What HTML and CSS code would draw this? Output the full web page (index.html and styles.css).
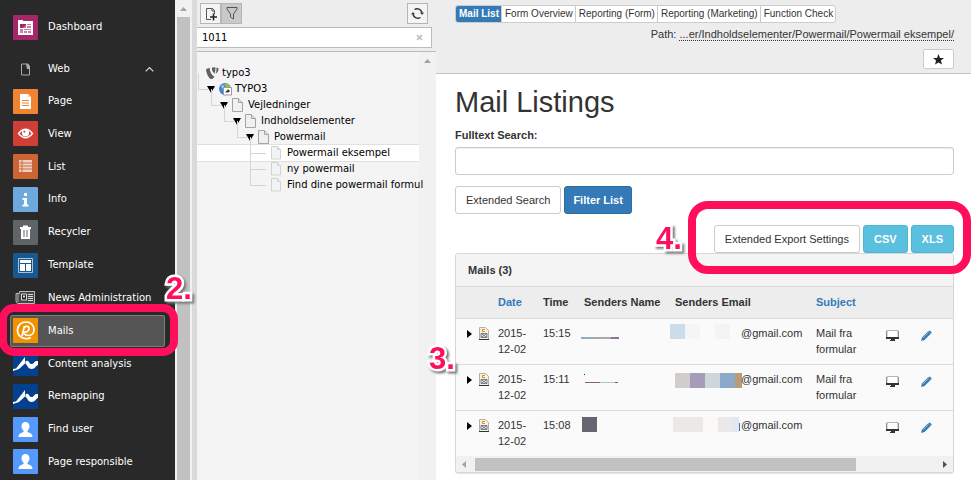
FILE: index.html
```html
<!DOCTYPE html>
<html lang="en">
<head>
<meta charset="utf-8">
<title>Mail Listings</title>
<link rel="stylesheet" href="styles.css">
</head>
<body>
<svg class="defs" aria-hidden="true">
  <symbol id="doc" viewBox="0 0 13 14"><path d="M.5.5h6l4 4v9H.5z" fill="#f0f0f0" stroke="#a3a3a3"/><path d="M6.500.5v4h4" fill="#ddd" stroke="#a3a3a3"/></symbol>
  <symbol id="doc-light" viewBox="0 0 13 14"><path d="M.5.5h6l3 3v9.500H.5z" fill="#f3f3f3" stroke="#d2d2d2"/><path d="M6.500.5v3h3" fill="#e8e8e8" stroke="#d2d2d2"/></symbol>
  <symbol id="wave" viewBox="0 0 25 25"><path fill="#03418f" d="M0 0h25v25H0z"/><path d="M0 18l3-.5L12 6v6.500L6 18l-6 2zM12.500 10q2.500-1 3.500 1c1.500 3 4 2.500 5.500 0q1-1.500 3.500-1v4c-2 0-2.500 4-6.500 4-4 0-3.500-4-6-5z" fill="#fff"/></symbol>
  <symbol id="user" viewBox="0 0 25 25"><rect width="25" height="25" rx="1" fill="#5599fc"/><path d="M12.500 5c2.500 0 4 1.700 4 4.200 0 2-1 3.400-2 4.300v1.500c2 1 5 1.300 5 5h-14c0-3.700 3-4 5-5v-1.500c-1-.9-2-2.300-2-4.300C8.500 6.700 10 5 12.500 5z" fill="#fff"/></symbol>
  <symbol id="mail-rec" viewBox="0 0 10 13"><path d="M.5.5h6l3 3v9h-9z" fill="#f4f1ec" stroke="#b3afab"/><path d="M3 2h3v1H4v1h2v1H3z" fill="#f39200"/><path d="M2 6.500h6v4H2zM2 6.500l6 4M8 6.500l-6 4" fill="#eee" stroke="#666" stroke-width=".8"/><path d="M0 12.500h10" stroke="#333"/></symbol>
  <symbol id="monitor" viewBox="0 0 13 11"><path d="M1 .5h11v8H1z" fill="#fff" stroke="#b5b5b5"/><path d="M.5 1v7M12.500 1v7" stroke="#8c8c8c"/><path d="M0 7h13v2H0zM5 9h4v1H5zM4 10h5v1H4z" fill="#333"/></symbol>
  <symbol id="pencil" viewBox="0 0 11 11"><path d="M0 11l1-3.500L7 1.500l2.500 2.500-6 6z" fill="#337ab7"/><path d="M7.700.900q.8-.8 1.600 0l.9.900q.8.800 0 1.600l-.5.500L7.200 1.400z" fill="#337ab7"/><path d="M2 8l5-5" stroke="#9fc0de" stroke-width=".8"/></symbol>
</svg>
<div class="app">
  <nav class="sidebar">
    <a class="mod" href="#dashboard"><svg class="mod-icon" viewBox="0 0 25 25"><rect width="25" height="25" rx="1" fill="#a4276a"/><path d="M5 5h5v1h10v14H5z" fill="#fff"/><path d="M7 9h6v4H7zM14 9h4v1h-4zM14 11h4v2h-4zM7 14h3v4H7zM11 14h7v1h-7zM11 16h3v2h-3zM15 16h3v2h-3z" fill="#c880a8"/><path d="M7 9h6v1l-2 2-2 1H7z" fill="#a4276a"/></svg>Dashboard</a>
    <button class="mod group" type="button"><svg class="mod-icon" viewBox="0 0 25 25"><path d="M8.500 7h5l3 3v8h-8z" fill="none" stroke="#aaa"/><path d="M13 6.500h2l2 2.500V12H14z" fill="#aaa"/></svg>Web<svg class="caret" viewBox="0 0 9 6"><path d="M.7 5.300L4.500 1.500l3.800 3.800" fill="none" stroke="#ddd" stroke-width="1.200"/></svg></button>
    <div class="mods">
      <a class="mod" href="#page"><svg class="mod-icon" viewBox="0 0 25 25"><rect width="25" height="25" rx="1" fill="#ef8433"/><path d="M7 5h8l3 3v12H7z" fill="#fff"/><path d="M15 5v3h3" fill="#f9cfac"/><path d="M9 11.500h7M9 14h7M9 16.500h7" stroke="#ef8433"/></svg>Page</a>
      <a class="mod" href="#view"><svg class="mod-icon" viewBox="0 0 25 25"><rect width="25" height="25" rx="1" fill="#d03f37"/><path d="M5.500 12.500q7-8.500 14 0-7 8.500-14 0z" fill="#d03f37" stroke="#fff" stroke-width="1.300"/><circle cx="12.500" cy="12" r="3.600" fill="#fff"/><circle cx="11.400" cy="10.800" r="1" fill="#d03f37"/></svg>View</a>
      <a class="mod" href="#list"><svg class="mod-icon" viewBox="0 0 25 25"><rect width="25" height="25" rx="1" fill="#cb6534"/><path d="M6 6h13v12H6z" fill="#efcfc0"/><path d="M6 9h13M6 12h13M6 15h13M9 6v12" stroke="#cb6534" stroke-width=".9"/></svg>List</a>
      <a class="mod" href="#info"><svg class="mod-icon" viewBox="0 0 25 25"><rect width="25" height="25" rx="1" fill="#6ea9de"/><path d="M11 6h3v3h-3zM9.500 11H14v6.500h1.500v2h-6v-2H11V13H9.500z" fill="#fff"/></svg>Info</a>
      <a class="mod" href="#recycler"><svg class="mod-icon" viewBox="0 0 25 25"><rect width="25" height="25" rx="1" fill="#5f6467"/><path d="M7 7h3V5.500h5V7h3v2h-1v10H8V9H7z" fill="#fff"/><path d="M11 10v7M14 10v7" stroke="#5f6467"/></svg>Recycler</a>
      <a class="mod" href="#template"><svg class="mod-icon" viewBox="0 0 25 25"><rect width="25" height="25" rx="1" fill="#19578f"/><path d="M5.500 5.500h14v14h-14z" fill="none" stroke="#a9c1d8"/><path d="M7 7h11v3H7zM7 11h5v7H7zM13 11h5v7h-5z" fill="#fff"/></svg>Template</a>
      <a class="mod" href="#news"><svg class="mod-icon" viewBox="0 0 25 25"><path d="M6.500 6.500h15v12h-17q-1.500-.5-1.500-3v-7h3.500z" fill="#444" stroke="#bbb"/><path d="M8.500 9h5v6h-5z" fill="#222" stroke="#ddd"/><path d="M10 10.500h2v2h-2zM15 9h5v1h-5zM15 11h5v1h-5zM15 13h5v1h-5zM15 15h5v1h-5z" fill="#ddd"/><path d="M5 9v8" stroke="#aaa"/></svg>News Administration</a>
      <a class="mod current" href="#mails"><svg class="mod-icon" viewBox="0 0 25 25"><path fill="#f39200" d="M0 0h25v25H0z"/><path d="M18 19.500C12 22.500 4.500 19 4.500 12.500 4.500 7 8.500 4 13 4s8 3 8 7.500c0 4-2.500 6-5 6-2 0-4-.5-5.500-2M11.500 8L9 18M11 9.500c2-2 5.500-1.500 5 1.500s-4 4-5.500 2.500" fill="none" stroke="#fff" stroke-width="1.700"/></svg>Mails</a>
      <a class="mod" href="#content"><svg class="mod-icon"><use href="#wave"/></svg>Content analysis</a>
      <a class="mod" href="#remapping"><svg class="mod-icon"><use href="#wave"/></svg>Remapping</a>
      <a class="mod" href="#finduser"><svg class="mod-icon"><use href="#user"/></svg>Find user</a>
      <a class="mod" href="#responsible"><svg class="mod-icon"><use href="#user"/></svg>Page responsible</a>
    </div>
  </nav>
  <div class="side-scroll"><svg viewBox="0 0 7 4"><path d="M0 4l3.500-4L7 4z" fill="#a3a3a3"/></svg><div class="thumb"></div></div>
  <section class="pagetree">
    <div class="tree-tools">
      <button type="button" class="tool" aria-label="New page"><svg width="12" height="14" viewBox="0 0 12 14"><path d="M6 12.500H1.500v-11h6l2 2V7" fill="none" stroke="#555"/><path d="M7 1v3h3" fill="none" stroke="#555"/><path d="M5 10h7M8.500 6.500v7" stroke="#222" stroke-width="1.500"/></svg></button><button type="button" class="tool on" aria-label="Filter"><svg width="12" height="13" viewBox="0 0 12 13"><path d="M1 .5h10v1.500L7.500 7v5L4.500 10V7L1 2z" fill="none" stroke="#555"/></svg></button>
      <button type="button" class="tool refresh" aria-label="Refresh"><svg width="13" height="13" viewBox="0 0 13 13"><path d="M3.500 2.500a5 5 0 0 1 7.500 3M9.500 10.500a5 5 0 0 1-7.500-3" fill="none" stroke="#333" stroke-width="1.400"/><path d="M9 5.500h4L11 8zM0 7.500h4L2 5z" fill="#333"/></svg></button>
    </div>
    <div class="filter"><input type="text" value="1011" aria-label="Filter tree"><button type="button" aria-label="Clear"><svg width="7" height="7" viewBox="0 0 7 7"><path d="M1 1l5 5M6 1L1 6" stroke="#bbb" stroke-width="1.600"/></svg></button></div>
    <div class="tree-area">
      <div class="tree">
        <div class="row"><svg class="node-icon" viewBox="0 0 13 14"><path d="M0 3.500q1-1.500 4-1.500c-.8 2 1.500 7.500 4.500 8.500-1 2-2 2.500-3.500 2.500C3 13 0 6.500 0 3.500zM6 1.500q2.500-.7 3.500 0 0 4-1 6C6.500 6.500 5.500 3 6 1.500zM10.500 1.500Q13 1.500 12.500 4 12 6.500 9.500 8q1.200-3 1-6.500z" fill="#606060"/></svg>typo3</div>
        <ul>
          <li><div class="row"><svg class="toggle" viewBox="0 0 10 9"><path d="M1 1h8L5 8z"/></svg><svg class="node-icon" viewBox="0 0 13 14"><circle cx="6" cy="7" r="6" fill="#4585d8"/><path d="M5 2q3-1.500 6 2v3L7 6z" fill="#8bc34a"/><path d="M2 4l3-1-1 4z" fill="#b5d6f5"/><path d="M4.500 5.500h8v7.500h-8z" fill="#fff" stroke="#999"/><path d="M6.500 11q0-2.500 2-2.500V7L11 9l-2.500 2V9.800z" fill="#222"/></svg>TYPO3</div>
            <ul>
              <li><div class="row"><svg class="toggle" viewBox="0 0 10 9"><path d="M1 1h8L5 8z"/></svg><svg class="node-icon"><use href="#doc"/></svg>Vejledninger</div>
                <ul>
                  <li><div class="row"><svg class="toggle" viewBox="0 0 10 9"><path d="M1 1h8L5 8z"/></svg><svg class="node-icon"><use href="#doc"/></svg>Indholdselementer</div>
                    <ul>
                      <li><div class="row"><svg class="toggle" viewBox="0 0 10 9"><path d="M1 1h8L5 8z"/></svg><svg class="node-icon"><use href="#doc"/></svg>Powermail</div>
                        <ul class="leaves">
                          <li><div class="row selected"><span class="toggle"></span><svg class="node-icon"><use href="#doc-light"/></svg>Powermail eksempel</div></li>
                          <li><div class="row"><span class="toggle"></span><svg class="node-icon"><use href="#doc-light"/></svg>ny powermail</div></li>
                          <li><div class="row"><span class="toggle"></span><svg class="node-icon"><use href="#doc-light"/></svg>Find dine powermail formul</div></li>
                        </ul></li>
                    </ul></li>
                </ul></li>
            </ul></li>
        </ul>
      </div>
      <div class="tree-scroll"><svg viewBox="0 0 7 4"><path d="M0 4l3.500-4L7 4z" fill="#a3a3a3"/></svg></div>
    </div>
  </section>
  <main class="content">
    <header class="docheader">
      <div class="tabs"><a class="active" href="#maillist">Mail List</a><a href="#overview">Form Overview</a><a href="#repform">Reporting (Form)</a><a href="#repmarketing">Reporting (Marketing)</a><a href="#check">Function Check</a></div>
      <div class="path">Path: <span>...er/Indholdselementer/Powermail/Powermail eksempel/</span></div>
      <button type="button" class="star" aria-label="Bookmark"><svg width="11" height="11" viewBox="0 0 11 11"><path d="M5.500 0L7 3.900l4 .2-3.100 2.500L9 10.600 5.500 8.400 2 10.600l1.100-4L0 4.100l4-.2z" fill="#222"/></svg></button>
    </header>
    <div class="body">
      <h1>Mail Listings</h1>
      <label for="search">Fulltext Search:</label>
      <input id="search" class="search" type="text">
      <div class="actions"><button type="button" class="btn">Extended Search</button><button type="button" class="btn primary">Filter List</button></div>
      <div class="actions export"><button type="button" class="btn">Extended Export Settings</button><button type="button" class="btn info">CSV</button><button type="button" class="btn info">XLS</button></div>
      <section class="panel">
        <h2>Mails (3)</h2>
        <table>
          <thead><tr><th class="c-icons"></th><th class="c-date"><a href="#date">Date</a></th><th class="c-time">Time</th><th class="c-name">Senders Name</th><th class="c-email">Senders Email</th><th class="c-subject"><a href="#subject">Subject</a></th><th class="c-view"></th><th></th></tr></thead>
          <tbody>
            <tr>
              <td><svg class="expand" viewBox="0 0 5 8"><path d="M0 0l5 4-5 4z"/></svg><svg class="rec"><use href="#mail-rec"/></svg></td>
              <td>2015-12-02</td><td>15:15</td>
              <td><svg class="mask" viewBox="0 0 66 15"><path d="M-3 13h15v2H-3z" fill="#93adc0"/><path d="M12 13h15v2H12z" fill="#a9a9a5"/><path d="M27 13h8v2h-8z" fill="#8c7198"/></svg></td>
              <td><svg class="mask" viewBox="0 0 66 15"><path d="M-5 0h15v15H-5z" fill="#cddceb"/><path d="M10 0h15v15H10z" fill="#f4f6f6"/><path d="M40 0h15v15H40z" fill="#f4f4f4"/></svg>@gmail.com</td>
              <td>Mail fra formular</td>
              <td><svg class="monitor"><use href="#monitor"/></svg></td><td><svg class="pencil"><use href="#pencil"/></svg></td>
            </tr>
            <tr>
              <td><svg class="expand" viewBox="0 0 5 8"><path d="M0 0l5 4-5 4z"/></svg><svg class="rec"><use href="#mail-rec"/></svg></td>
              <td>2015-12-02</td><td>15:11</td>
              <td><svg class="mask" viewBox="0 0 66 15"><path d="M0 4h1v1H0z" fill="#333"/><path d="M1 12h15v1H1z" fill="#8d5f77"/><path d="M16 12h15v1H16z" fill="#b7c3c6"/><path d="M31 12h3v1h-3z" fill="#6e5877"/></svg></td>
              <td><svg class="mask" viewBox="0 0 66 15"><path d="M0 3h15v15H0z" fill="#d1cdcb"/><path d="M15 3h15v15H15z" fill="#a79bba"/><path d="M30 3h15v15H30z" fill="#ced6d9"/><path d="M45 3h15v15H45z" fill="#8ba9c8"/><path d="M60 3h7v15h-7z" fill="#b99b7a"/></svg>@gmail.com</td>
              <td>Mail fra formular</td>
              <td><svg class="monitor"><use href="#monitor"/></svg></td><td><svg class="pencil"><use href="#pencil"/></svg></td>
            </tr>
            <tr>
              <td><svg class="expand" viewBox="0 0 5 8"><path d="M0 0l5 4-5 4z"/></svg><svg class="rec"><use href="#mail-rec"/></svg></td>
              <td>2015-12-02</td><td>15:08</td>
              <td><svg class="mask" viewBox="0 0 66 15"><path d="M-2 1h15v15H-2z" fill="#656672"/></svg></td>
              <td><svg class="mask" viewBox="0 0 66 15"><path d="M-2 1h30v15H-2z" fill="#ece8e8"/><path d="M28 1h15v15H28z" fill="#fbf9f5"/><path d="M43 1h15v15H43z" fill="#e9e8ea"/><path d="M58 1h6v15h-6z" fill="#e3e7ef"/><path d="M64 7h1v8h-1z" fill="#337ab7"/></svg>@gmail.com</td>
              <td></td>
              <td><svg class="monitor"><use href="#monitor"/></svg></td><td><svg class="pencil"><use href="#pencil"/></svg></td>
            </tr>
          </tbody>
        </table>
        <div class="hscroll"><svg viewBox="0 0 4 7"><path d="M4 0v7L0 3.500z" fill="#a3a3a3"/></svg><div class="track"><div class="thumb"></div></div><svg viewBox="0 0 4 7"><path d="M0 0v7l4-3.500z" fill="#505050"/></svg></div>
      </section>
    </div>
  </main>
  <div class="ring ring-mails"></div>
  <div class="ring ring-export"></div>
  <span class="step step-2">2.</span>
  <span class="step step-3">3.</span>
  <span class="step step-4">4.</span>
</div>
</body>
</html>
```
FILE: styles.css
```css
* { box-sizing: border-box; }
body { margin: 0; font: 11px/16px "Liberation Sans", Arial, sans-serif; color: #333; background: #fff; }
button, input { font: inherit; color: inherit; margin: 0; padding: 0; }
a { color: #337ab7; text-decoration: none; }
ul { list-style: none; margin: 0; padding: 0; }
svg { flex: none; overflow: visible; }
.defs { position: absolute; width: 0; height: 0; }
.app { position: relative; display: grid; grid-template-columns: 175px 22px 239px 1fr; height: 100vh; overflow: hidden; }

/* Module menu */
.sidebar { background: #292929; display: flex; flex-direction: column; padding: 11px 0 2px; font: 10px/16px "DejaVu Sans", Verdana, sans-serif; }
.mod { display: flex; align-items: center; gap: 10px; height: 32px; flex: none; margin: 0 10px 0 10px; padding: 0 2px; border: 1px solid transparent; color: #fff; background: none; text-align: left; white-space: nowrap; }
.mod-icon { width: 25px; height: 25px; }
.group { margin-top: 10px; }
.caret { width: 9px; height: 6px; margin: 0 8px 0 auto; }
.mods { flex: 1; display: flex; flex-direction: column; justify-content: space-between; }
.current { background: #555; border-color: #7d7d7d; border-radius: 2px; }

.side-scroll { background: #f1f1f1; border-right: 5px solid #dadada; display: flex; flex-direction: column; align-items: center; padding-top: 7px; gap: 6px; }
.side-scroll svg, .tree-scroll svg { width: 7px; height: 4px; }
.side-scroll .thumb { width: 13px; flex: 1; background: #c1c1c1; }

/* Page tree */
.pagetree { background: #ededed; display: flex; flex-direction: column; min-width: 0; font: 10px/16px "DejaVu Sans", Verdana, sans-serif; color: #000; }
.tree-tools { display: flex; padding: 3px 8px 3px 3px; }
.tool { width: 21px; height: 21px; border: 1px solid #b5b5b5; background: #f4f4f4; display: grid; place-items: center; }
.tool.on { background: #c9c9c9; }
.tool.refresh { margin-left: auto; }
.filter { display: flex; align-items: center; height: 21px; margin-right: 4px; border: 1px solid #bbb; border-left: 0; background: #fff; }
.filter input { flex: 1; min-width: 0; border: 0; background: none; padding-left: 5px; outline: 0; }
.filter button { border: 0; background: none; width: 24px; display: grid; place-items: center; }
.tree-area { flex: 1; display: flex; margin-top: 3px; border-top: 1px solid #bbb; background: #f4f4f4; min-height: 0; }
.tree { flex: 1; min-width: 0; padding: 13px 0 0 9px; }
.tree-scroll { width: 17px; background: #f1f1f1; padding: 7px 5px; line-height: 0; }
.row { display: flex; align-items: center; gap: 3px; height: 16px; white-space: nowrap; }
.node-icon { width: 13px; height: 14px; }
.toggle { width: 10px; height: 9px; flex: none; }
.tree li { position: relative; }
.tree li li { margin-left: 13px; }
.tree li::before { content: ""; position: absolute; left: -8px; top: -8px; width: 9px; height: 16px; border: solid #d5d5d5; border-width: 0 0 1px 1px; }
.tree .leaves li::before { width: 15px; }
.row.selected { margin-left: -61px; padding-left: 61px; background: #fff; box-shadow: 0 -1px #e0e0e0, 0 1px #e0e0e0; }

/* Module content */
.content { display: flex; flex-direction: column; min-width: 0; }
.docheader { height: 74px; background: #ededed; border-bottom: 1px solid #c3c3c3; padding: 5px 17px 0 19px; display: flex; flex-direction: column; align-items: flex-end; }
.tabs { display: flex; align-self: flex-start; font-size: 10px; border: 1px solid #ccc; border-radius: 3px; background: #fff; }
.tabs a { padding: 0 2px 0 3px; color: #333; border-right: 1px solid #ccc; white-space: nowrap; }
.tabs a:last-child { border-right: 0; }
.tabs .active { background: #337ab7; color: #fff; font-weight: bold; border-radius: 2px 0 0 2px; }
.path { margin: 3px 0 7px; }
.path span { border-bottom: 1px dotted #333; }
.star { width: 31px; height: 20px; border: 1px solid #ccc; border-radius: 2px; background: #fff; display: grid; place-items: center; }

.body { padding: 10px 17px 0 19px; display: flex; flex-direction: column; }
h1 { margin: 0 0 7px; font-size: 29px; line-height: 36px; font-weight: normal; }
label { font-weight: bold; margin-bottom: 4px; }
.search { height: 28px; width: 100%; border: 1px solid #ccc; border-radius: 3px; background: #fff; padding: 0 8px; box-shadow: inset 0 1px 1px #eee; }
.actions { display: flex; gap: 3px; margin-top: 11px; }
.btn { height: 28px; padding: 0 10px; border: 1px solid #ccc; border-radius: 3px; background: #fff; white-space: nowrap; }
.btn.primary { padding: 0 8px; background: #337ab7; border-color: #2e6da4; color: #fff; font-weight: bold; }
.btn.info { background: #5bc0de; border-color: #46b8da; color: #fff; font-weight: bold; }
.export { justify-content: flex-end; }

.panel { border: 1px solid #d7d7d7; border-radius: 3px; background: #fafafa; box-shadow: 0 1px 1px #e4e4e4; overflow: hidden; }
h2 { margin: 0; padding: 8px 12px; font-size: 11px; line-height: 16px; background: #f4f4f4; border-bottom: 1px solid #d7d7d7; }
table { width: 100%; border-collapse: collapse; table-layout: fixed; }
th { height: 31px; text-align: left; background: #ededed; padding: 0; white-space: nowrap; }
td { height: 46px; vertical-align: top; padding: 6px 0 7px; border-top: 1px solid #dadada; }
tbody td:nth-child(2) { padding-right: 14px; }
tbody td:nth-child(6) { padding-right: 24px; }
.c-icons { width: 42px; }
.c-date { width: 45px; }
.c-time { width: 41px; }
.c-name { width: 91px; }
.c-email { width: 141px; }
.c-subject { width: 70px; }
.c-view { width: 35px; }
.expand { width: 5px; height: 8px; margin: 5px 7px 3px 11px; vertical-align: top; }
.rec { width: 10px; height: 13px; vertical-align: top; margin-top: 2px; }
.mask { width: 66px; height: 15px; vertical-align: top; margin-top: -1px; }
.monitor, .pencil { height: 11px; vertical-align: top; margin-top: 5px; }
.monitor { width: 13px; }
.pencil { width: 11px; }
.hscroll { display: flex; align-items: center; gap: 9px; height: 16px; padding: 0 6px; background: #f1f1f1; }
.hscroll svg { width: 4px; height: 7px; }
.track { flex: 1; }
.hscroll .thumb { width: 83%; height: 13px; background: #c1c1c1; }

/* Guide marks laid over the screen */
.ring { position: absolute; border: 8px solid #ff0f5b; pointer-events: none; }
.ring-mails { left: -1px; top: 304px; width: 179px; height: 52px; border-radius: 15px; }
.ring-export { right: 0; top: 201px; width: 283px; height: 73px; border-radius: 20px; }
.step { position: absolute; font-size: 31px; line-height: 32px; font-weight: bold; color: #ff0f5b; -webkit-text-stroke: 5px #fff; paint-order: stroke fill; filter: drop-shadow(2px 2px 1px #777); }
.step-2 { left: 166px; top: 273px; }
.step-3 { left: 429px; top: 343px; }
.step-4 { left: 656px; top: 223px; }
```
